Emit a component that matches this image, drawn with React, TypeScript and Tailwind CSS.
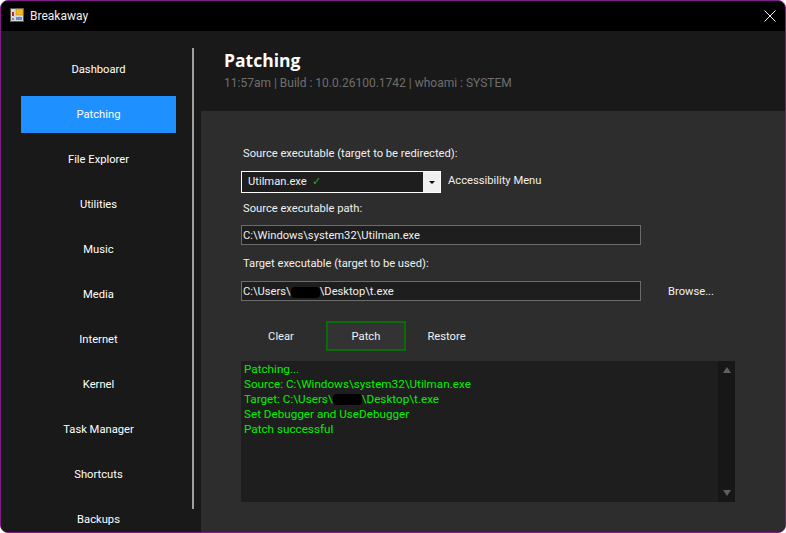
const navItems = ["Dashboard", "Patching", "File Explorer", "Utilities", "Music", "Media", "Internet", "Kernel", "Task Manager", "Shortcuts", "Backups"];

const logLines = ["Patching...", "Source: C:\\Windows\\system32\\Utilman.exe"];

function AppIcon() {
  return (
    <svg width="14" height="14" viewBox="0 0 14 14" className="-translate-y-px shrink-0">
      <rect x="0.5" y="0.5" width="13" height="13" fill="#d8d8d8" stroke="#555" />
      <rect x="6" y="1" width="7" height="6" fill="#f5b81f" stroke="#b98a1a" strokeWidth="0.5" />
      <rect x="2" y="4" width="2" height="4" fill="#c0272d" />
      <rect x="6" y="9" width="6" height="3" fill="#5b8fd9" />
      <rect x="2" y="10" width="2" height="2" fill="#888" />
    </svg>
  );
}

function Redacted() {
  return <span className="inline-block h-[11px] w-[29px] rounded-[4px] bg-black align-middle" />;
}

function PathBox({ children }: { children: React.ReactNode }) {
  return (
    <div className="flex h-[20px] w-[400px] items-center border border-[#6b6b6b] bg-[#1e1e1e] pl-[1px] pt-[2px] text-[#f0f0f0]">
      {children}
    </div>
  );
}

export default function App() {
  return (
    <div className="flex h-[533px] w-[786px] flex-col overflow-hidden rounded-[8px] border border-[#7f1a86] bg-black font-['Roboto',sans-serif] text-[11.2px] text-white">
      <div className="flex h-[30px] shrink-0 items-center pl-[9px] pr-[9px]">
        <AppIcon />
        <span className="ml-[6px] text-[12px] text-[#f0f0f0]">Breakaway</span>
        <svg width="12" height="12" viewBox="0 0 12 12" className="ml-auto" stroke="#f0f0f0" strokeWidth="1">
          <path d="M0.5 0.5 L11.5 11.5 M11.5 0.5 L0.5 11.5" />
        </svg>
      </div>

      <div className="flex min-h-0 flex-1">
        <div className="relative w-[200px] shrink-0 overflow-hidden bg-[#191919] pl-[20px] pt-[20px]">
          <div className="flex w-[155px] flex-col gap-[8px]">
            {navItems.map((item) => (
              <div
                key={item}
                className={`flex h-[37px] shrink-0 items-center justify-center pt-[1px] ${item === "Patching" ? "bg-[#1e90ff]" : ""}`}
              >
                {item}
              </div>
            ))}
          </div>
          <div className="absolute left-[191px] top-[17px] h-[461px] w-[2px] bg-[#a0a0a0]" />
        </div>

        <div className="flex min-w-0 flex-1 flex-col">
          <div className="h-[80px] shrink-0 bg-[#191919] pl-[23px] pt-[15px]">
            <div className="font-['Open_Sans',sans-serif] text-[17.5px] font-bold leading-[28px]">Patching</div>
            <div className="text-[12px] leading-[18px] text-[#6f6f6f]">11:57am | Build : 10.0.26100.1742 | whoami : SYSTEM</div>
          </div>

          <div className="flex-1 bg-[#2d2d2d] pl-[40px] pt-[34px]">
            <div className="ml-[2px] h-[18px] leading-[18px] text-[#f0f0f0]">Source executable (target to be redirected):</div>
            <div className="mt-[8px] flex h-[22px] items-center">
              <div className="flex h-[22px] w-[200px] items-center border border-white bg-[#1e1e1e]">
                <span className="pl-[6px] text-[#f0f0f0]">Utilman.exe</span>
                <span className="pl-[5px] text-[#2fa52f]">✓</span>
                <div className="ml-auto flex h-full w-[17px] items-center justify-center bg-[#f0f0f0]">
                  <div className="h-0 w-0 border-x-[3px] border-t-[3px] border-x-transparent border-t-black" />
                </div>
              </div>
              <span className="ml-[7px] -translate-y-px text-[#f0f0f0]">Accessibility Menu</span>
            </div>
            <div className="ml-[2px] mt-[7px] h-[18px] leading-[18px] text-[#f0f0f0]">Source executable path:</div>
            <div className="mt-[7px]">
              <PathBox>C:\Windows\system32\Utilman.exe</PathBox>
            </div>
            <div className="ml-[2px] mt-[9px] h-[18px] pt-[1px] leading-[18px] text-[#f0f0f0]">Target executable (target to be used):</div>
            <div className="mt-[9px] flex items-center">
              <PathBox>
                C:\Users\<Redacted />\Desktop\t.exe
              </PathBox>
              <span className="ml-[27px] translate-y-px text-[#f0f0f0]">Browse...</span>
            </div>

            <div className="mt-[20px] flex h-[30px] items-center">
              <div className="flex h-[30px] w-[80px] items-center justify-center pt-[2px] text-[#f0f0f0]">Clear</div>
              <div className="ml-[5px] flex h-[30px] w-[80px] items-center justify-center border-2 border-[#0b6b0b] bg-[#333333] pt-[2px] text-[#f0f0f0]">Patch</div>
              <div className="flex h-[30px] w-[81px] items-center justify-center pt-[2px] text-[#f0f0f0]">Restore</div>
            </div>

            <div className="mt-[10px] flex h-[141px] w-[494px] bg-[#1e1e1e]">
              <div className="flex-1 pl-[3px] pt-[1px] text-[11.7px] leading-[15px] text-[#00f000]">
                {logLines.map((line) => (
                  <div key={line}>{line}</div>
                ))}
                <div>
                  Target: C:\Users\<Redacted />\Desktop\t.exe
                </div>
                <div>Set Debugger and UseDebugger</div>
                <div>Patch successful</div>
              </div>
              <div className="flex w-[17px] flex-col items-center justify-between bg-[#171717] py-[6px]">
                <div className="h-0 w-0 border-x-[4.5px] border-b-[6px] border-x-transparent border-b-[#5f5f5f]" />
                <div className="h-0 w-0 border-x-[4.5px] border-t-[6px] border-x-transparent border-t-[#5f5f5f]" />
              </div>
            </div>
          </div>
        </div>
      </div>
    </div>
  );
}
